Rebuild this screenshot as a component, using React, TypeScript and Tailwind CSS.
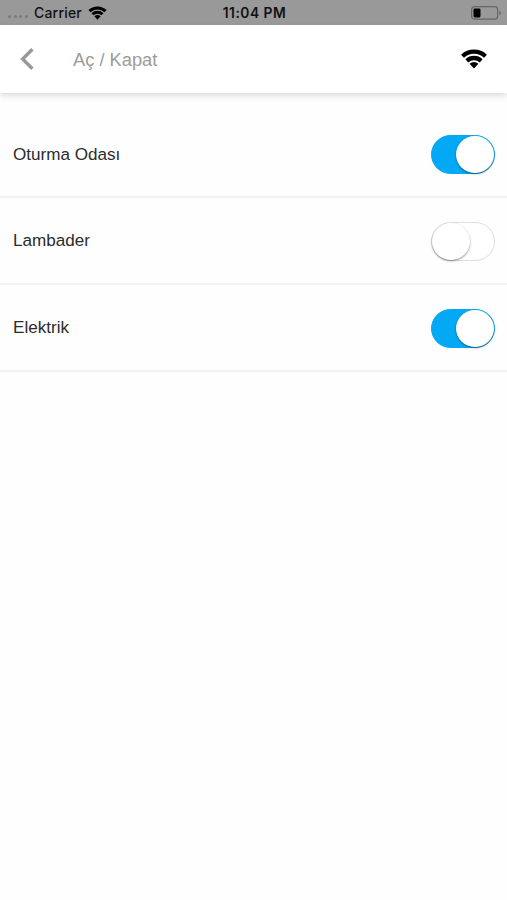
import React, { useState } from 'react';

interface Device {
    id: string;
    name: string;
    isOn: boolean;
}

const initialDevices: Device[] = [
    { id: 'living-room', name: 'Oturma Odası', isOn: true },
    { id: 'lamp', name: 'Lambader', isOn: false },
    { id: 'electric', name: 'Elektrik', isOn: true },
];

const WifiIcon: React.FC<{ className?: string }> = ({ className }) => (
    <svg viewBox="0 0 26 20" className={className} fill="none" stroke="black">
        <path d="M1.54 7.22A16.8 16.8 0 0 1 24.46 7.22" strokeWidth="4.3" />
        <path d="M5.84 11.82A10.5 10.5 0 0 1 20.16 11.82" strokeWidth="4.3" />
        <path d="M13 19.5L8.57 14.75A6.5 6.5 0 0 1 17.43 14.75Z" fill="black" stroke="none" />
    </svg>
);

const StatusBar: React.FC = () => (
    <div className="h-[25px] bg-[#999999] grid grid-cols-3 items-center pl-2 pr-[5px] text-[#111111] font-['Inter',sans-serif] text-[14px] leading-[22px] font-medium">
        <div className="flex items-center">
            <div className="flex gap-[2.5px] w-[26px] pt-2">
                {[0, 1, 2, 3].map(dot => (
                    <span key={dot} className="w-[3px] h-[3px] rounded-full bg-[#7b7b7b]"></span>
                ))}
            </div>
            <span className="w-[54px] pt-px tracking-[0.2px]">Carrier</span>
            <WifiIcon className="w-[19px] h-[14px]" />
        </div>
        <span className="text-center whitespace-nowrap pt-px pr-px tracking-[0.5px] font-semibold text-[13.8px]">11:04 PM</span>
        <svg viewBox="0 0 31 14" className="w-[31px] h-[14px] justify-self-end" fill="none">
            <rect x="0.6" y="0.6" width="26" height="12.6" rx="3" stroke="#666666" strokeWidth="1.2" />
            <rect x="2.5" y="2.4" width="7" height="9" rx="1.3" fill="black" />
            <path d="M28.3 4.7v4.6c2-.8 2-3.8 0-4.6z" fill="#666666" />
        </svg>
    </div>
);

const Toggle: React.FC<{ isOn: boolean; label: string; onToggle: () => void }> = ({ isOn, label, onToggle }) => (
    <button
        role="switch"
        aria-checked={isOn}
        aria-label={label}
        onClick={onToggle}
        className={`w-16 h-[39.5px] rounded-full border flex items-center transition-colors ${isOn ? 'bg-[#03a9f4] border-[#03a9f4] justify-end' : 'bg-white border-[#dddddd] justify-start'}`}
    >
        <span className="w-[38px] h-[37.5px] rounded-full bg-white shadow-[0_1px_2px_rgba(0,0,0,0.45)]"></span>
    </button>
);

const App: React.FC = () => {
    const [devices, setDevices] = useState<Device[]>(initialDevices);

    const toggleDevice = (id: string) => {
        setDevices(prev => prev.map(d => (d.id === id ? { ...d, isOn: !d.isOn } : d)));
    };

    return (
        <div className="min-h-screen bg-[#fefefe] font-['Liberation_Sans',Arial,sans-serif]">
            <StatusBar />

            <header className="h-[68px] bg-white flex items-center pl-5 pr-5 shadow-[0_3px_6px_rgba(0,0,0,0.13)]">
                <button aria-label="Geri" className="w-[53px]">
                    <svg viewBox="0 0 14 22" className="w-[14px] h-[22px]" fill="none" stroke="#999999" strokeWidth="3.4">
                        <path d="M12.4 1.2L2.6 11L12.4 20.8" />
                    </svg>
                </button>
                <h1 className="flex-1 text-[18.3px] text-[#9b9b9b] pt-px">Aç / Kapat</h1>
                <WifiIcon className="w-[26px] h-5" />
            </header>

            <main className="pt-[18.3px]">
                {devices.map(device => (
                    <div key={device.id} className="h-[86.8px] flex items-center justify-between pl-[13px] pr-3 pt-[2px] border-b-2 border-[#f3f3f3]">
                        <span className="text-[17.1px] leading-5 text-[#2b2b2b]">{device.name}</span>
                        <Toggle isOn={device.isOn} label={device.name} onToggle={() => toggleDevice(device.id)} />
                    </div>
                ))}
            </main>
        </div>
    );
};

export default App;
